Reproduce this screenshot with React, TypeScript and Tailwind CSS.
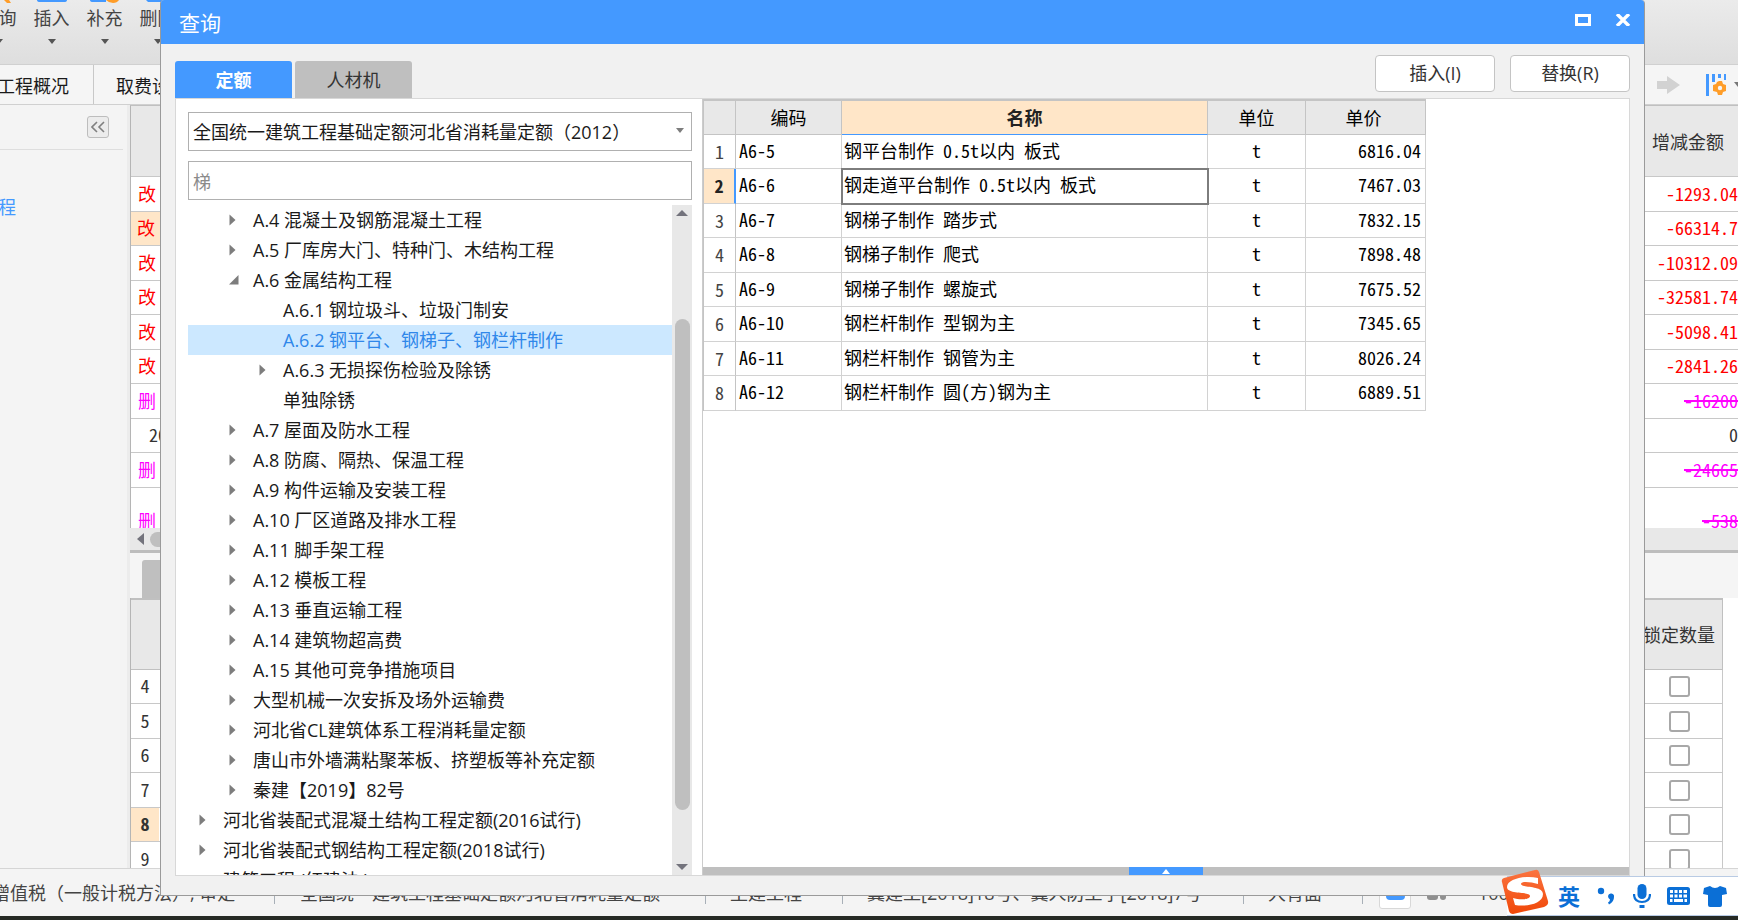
import React from "react";

type Node = { label: string; level: 0 | 1 | 2; state: "closed" | "open" | "leaf"; selected?: boolean };

const tree: Node[] = [
  { label: "A.4 混凝土及钢筋混凝土工程", level: 1, state: "closed" },
  { label: "A.5 厂库房大门、特种门、木结构工程", level: 1, state: "closed" },
  { label: "A.6 金属结构工程", level: 1, state: "open" },
  { label: "A.6.1 钢垃圾斗、垃圾门制安", level: 2, state: "leaf" },
  { label: "A.6.2 钢平台、钢梯子、钢栏杆制作", level: 2, state: "leaf", selected: true },
  { label: "A.6.3 无损探伤检验及除锈", level: 2, state: "closed" },
  { label: "单独除锈", level: 2, state: "leaf" },
  { label: "A.7 屋面及防水工程", level: 1, state: "closed" },
  { label: "A.8 防腐、隔热、保温工程", level: 1, state: "closed" },
  { label: "A.9 构件运输及安装工程", level: 1, state: "closed" },
  { label: "A.10 厂区道路及排水工程", level: 1, state: "closed" },
  { label: "A.11 脚手架工程", level: 1, state: "closed" },
  { label: "A.12 模板工程", level: 1, state: "closed" },
  { label: "A.13 垂直运输工程", level: 1, state: "closed" },
  { label: "A.14 建筑物超高费", level: 1, state: "closed" },
  { label: "A.15 其他可竞争措施项目", level: 1, state: "closed" },
  { label: "大型机械一次安拆及场外运输费", level: 1, state: "closed" },
  { label: "河北省CL建筑体系工程消耗量定额", level: 1, state: "closed" },
  { label: "唐山市外墙满粘聚苯板、挤塑板等补充定额", level: 1, state: "closed" },
  { label: "秦建【2019】82号", level: 1, state: "closed" },
  { label: "河北省装配式混凝土结构工程定额(2016试行)", level: 0, state: "closed" },
  { label: "河北省装配式钢结构工程定额(2018试行)", level: 0, state: "closed" },
  { label: "建筑工程 (红建法 )", level: 0, state: "leaf" },
];

const items = [
  ["A6-5", "钢平台制作 0.5t以内 板式", "6816.04"],
  ["A6-6", "钢走道平台制作 0.5t以内 板式", "7467.03"],
  ["A6-7", "钢梯子制作 踏步式", "7832.15"],
  ["A6-8", "钢梯子制作 爬式", "7898.48"],
  ["A6-9", "钢梯子制作 螺旋式", "7675.52"],
  ["A6-10", "钢栏杆制作 型钢为主", "7345.65"],
  ["A6-11", "钢栏杆制作 钢管为主", "8026.24"],
  ["A6-12", "钢栏杆制作 圆(方)钢为主", "6889.51"],
];

const changes = [
  { mark: "改", amount: "-1293.04" },
  { mark: "改", amount: "-66314.7", active: true },
  { mark: "改", amount: "-10312.09" },
  { mark: "改", amount: "-32581.74" },
  { mark: "改", amount: "-5098.41" },
  { mark: "改", amount: "-2841.26" },
  { mark: "删", amount: "-16200" },
  { mark: "20", amount: "0" },
  { mark: "删", amount: "-24665" },
];

const grid = "font-['Noto_Sans_Mono_CJK_SC','Noto_Sans_CJK_SC',monospace]";
const markColor: Record<string, string> = { 改: "text-[#ff0000]", 删: "text-[#ff00ff]", "20": "text-[#333333]" };
const indent = ["pl-[11px]", "pl-[41px]", "pl-[71px]"];

function Caret({ className = "" }: { className?: string }) {
  return (
    <svg viewBox="0 0 8 5" className={`h-[5px] w-2 shrink-0 ${className}`}>
      <path d="M0 0h8L4 5z" fill="currentColor" />
    </svg>
  );
}

function TreeRow({ node }: { node: Node }) {
  return (
    <li
      className={`flex h-[30px] shrink-0 items-center gap-[13px] whitespace-nowrap ${indent[node.level]} ${
        node.selected ? "bg-[#cce8ff] text-[#2f87ea]" : "text-[#1a1a1a]"
      }`}
    >
      <svg viewBox="0 0 11 12" className="h-3 w-[11px] shrink-0 text-[#7d7d7d]">
        {node.state === "closed" && <path d="M0.500 0.500L6.500 6L0.500 11.500z" fill="currentColor" />}
        {node.state === "open" && <path d="M9.500 1v9.500H0z" fill="currentColor" />}
      </svg>
      <span>{node.label}</span>
    </li>
  );
}

function ToolItem({ label, icon }: { label: string; icon: React.ReactNode }) {
  return (
    <button className="flex h-full w-[53px] shrink-0 flex-col items-center whitespace-nowrap text-[#444444]">
      <svg viewBox="0 0 32 3" className="h-[3px] w-8 shrink-0">{icon}</svg>
      <span className="h-[30px] leading-[30px]">{label}</span>
      <Caret className="mt-[6px] text-[#555555]" />
    </button>
  );
}

function Workspace() {
  return (
    <div className="flex h-full flex-col overflow-hidden">
      <div className="flex h-[65px] shrink-0 overflow-hidden border-b border-[#d0d0d0] bg-linear-to-b from-[#ebebeb] to-[#dedede]">
        <div className="-ml-7 flex">
          <ToolItem label="查询" icon={<path d="M21 0h5l2 3h-4z" fill="#ff9d28" />} />
          <ToolItem label="插入" icon={<path d="M1 0h30q0 2-3 2H4Q1 2 1 0z" fill="#4499ff" />} />
          <ToolItem label="补充" icon={<><path d="M1 0h16v2H4Q1 2 1 0z" fill="#4499ff" /><path d="M17 0h13q-2 3-6 3t-7-3z" fill="#ff9d28" /></>} />
          <ToolItem label="删除" icon={<path d="M4 0h26v2H6z" fill="#4499ff" />} />
        </div>
      </div>

      <div className="flex h-10 shrink-0 items-stretch border-b border-[#d0d0d0] bg-[#f5f5f5] text-[#1a1a1a]">
        <button className="flex w-[94px] items-center justify-end overflow-hidden border-r border-[#c8c8c8] pt-[2px] pr-6 whitespace-nowrap">工程概况</button>
        <button className="px-[22px] pt-[2px] whitespace-nowrap">取费设置</button>
        <div className="ml-auto flex items-center">
          <svg viewBox="0 0 23 18" className="mr-[26px] h-[18px] w-[23px] text-[#d2d2d2]">
            <path d="M0 5h10V0l13 9-13 9v-5H0z" fill="currentColor" />
          </svg>
          <svg viewBox="0 0 22 24" className="mr-[6px] h-6 w-[22px]">
            <path d="M0 1h3v22H0zM6 1h3v8H6zM12 1h3v4h-3zM18 1h2v6h-2z" fill="#4499ff" />
            <path d="M11 9l2-1h3l1 3 3 1v6l-3 1-1 3h-4l-1-3-4-1v-6l3-1z" fill="#ff9d28" />
            <circle cx="14" cy="15" r="2.200" fill="#f5f5f5" />
          </svg>
          <Caret className="-mr-1 text-[#777777]" />
        </div>
      </div>

      <div className="flex min-h-0 flex-1">
        <aside className="flex w-[127px] shrink-0 flex-col bg-[#f4f4f4]">
          <div className="mr-1 flex h-[45px] items-start justify-end border-b border-[#dedede] pt-[11px] pr-[14px]">
            <button aria-label="折叠" className="flex size-[22px] items-center justify-center rounded-[3px] border border-[#bdbdbd] bg-[#ececec]">
              <svg viewBox="0 0 14 12" className="h-3 w-[14px]" fill="none" stroke="#808080" strokeWidth="1.600">
                <path d="M6 1L1 6l5 5M13 1L8 6l5 5" />
              </svg>
            </button>
          </div>
          <a href="#project" className="mt-[42px] flex h-[30px] w-4 items-center justify-end whitespace-nowrap text-[#4499ff]">工程</a>
        </aside>
        <div className="flex min-w-0 flex-1 flex-col border-l-[3px] border-[#ececec] bg-white">
          <div className={`flex h-[423px] shrink-0 flex-col overflow-hidden border-t border-l border-t-[#c0c0c0] border-l-[#b5b5b5] ${grid}`}>
            <div className="flex h-[71px] shrink-0 items-center justify-end border-b border-[#c8c8c8] bg-[#e8e8e8] pr-[14px] text-[#333333]">增减金额</div>
            {changes.map((c, i) => (
              <div key={i} className="flex h-[35px] shrink-0 items-center justify-between border-b border-[#c8c8c8] odd:h-[34px]">
                <span
                  className={`flex h-full items-center pb-[3px] ${c.active ? "w-[100px] bg-[#ffe6c8] pl-[6px]" : c.mark === "20" ? "pl-[18px]" : "pl-[7px]"} ${markColor[c.mark]}`}
                >
                  {c.mark}
                </span>
                <span className={`pb-[3px] ${markColor[c.mark]} ${c.mark === "删" ? "line-through decoration-2" : ""}`}>{c.amount}</span>
              </div>
            ))}
            <div className="flex h-16 shrink-0 items-center justify-between text-[#ff00ff]">
              <span className="pl-[7px]">删</span>
              <span className="line-through decoration-2">-538</span>
            </div>
          </div>
          <div className="flex h-[22px] shrink-0 items-center gap-[6px] bg-[#e8e8e8] pl-[7px]">
            <svg viewBox="0 0 7 12" className="h-3 w-[7px]"><path d="M7 0v12L0 6z" fill="#73737c" /></svg>
            <div className="h-[15px] w-[500px] rounded-full bg-[#bfbfbf]" />
          </div>
          <div className="h-[3px] shrink-0 bg-[#bdbdbd]" />
          <div className="flex h-[45px] shrink-0 items-end bg-[#f5f5f5] pl-3">
            <div className="h-[38px] w-[100px] rounded-t-[3px] bg-[#bfbfbf]" />
          </div>
          <div className="flex min-h-0 flex-1 flex-col overflow-hidden border-l border-[#b5b5b5]">
            <div className="mr-[15px] flex h-[72px] shrink-0 items-center justify-end border-t-2 border-r border-b border-[#c0c0c0] bg-[#e8e8e8] pr-[7px] text-[#333333]">锁定数量</div>
            {[4, 5, 6, 7, 8, 9].map((n) => (
              <label
                key={n}
                className={`mr-[15px] flex h-[34px] shrink-0 items-center justify-between border-r border-b border-[#c8c8c8] pr-8 odd:h-[35px] ${grid}`}
              >
                <span className={`flex h-full w-7 items-center justify-center pb-[3px] ${n === 8 ? "bg-[#ffe6c8] font-bold" : ""} text-[#333333]`}>{n}</span>
                <input type="checkbox" className="size-[21px] appearance-none rounded-[3px] border-2 border-[#a8a8a8] bg-white" />
              </label>
            ))}
          </div>
        </div>
      </div>

      <footer className="flex h-12 shrink-0 items-center border-t border-[#d5d5d5] bg-[#f4f4f4] whitespace-nowrap text-[#444444]">
        <span className="-ml-2 w-[282px]">增值税（一般计税方法）, 审定</span>
        <span className="h-[22px] w-[431px] border-l border-[#a8b0b8] pl-[25px]">全国统一建筑工程基础定额河北省消耗量定额</span>
        <span className="h-[22px] w-[137px] border-l border-[#a8b0b8] pl-6">土建工程</span>
        <span className="h-[22px] w-[401px] border-l border-[#a8b0b8] pl-6">冀建工[2018]18号、冀人防工字[2018]7号</span>
        <span className="h-[22px] w-[119px] border-l border-[#a8b0b8] pl-6">大背面</span>
        <span className="flex h-[22px] items-center border-l border-[#a8b0b8] pl-4">
          <span className="flex h-8 w-8 items-center justify-center rounded-[3px] border border-[#d8d8d8] bg-white">
            <span className="h-[14px] w-[19px] rounded-[4px] bg-[#4499ff]" />
          </span>
          <span className="ml-4 flex gap-[2px]">
            <span className="h-[14px] w-[11px] rounded-[3px] bg-[#8f8f8f]" />
            <span className="h-[14px] w-[6px] rounded-[3px] bg-[#8f8f8f]" />
          </span>
          <span className="ml-8">100%</span>
        </span>
      </footer>
      <div className="h-[4px] shrink-0 bg-[#262a25]" />
    </div>
  );
}

function ItemTable() {
  return (
    <table className={`w-[723px] table-fixed border-separate border-spacing-0 border-t-2 border-l border-[#c4c4c4] text-black ${grid}`}>
      <colgroup>
        <col className="w-8" />
        <col className="w-[106px]" />
        <col />
        <col className="w-[98px]" />
        <col className="w-[120px]" />
      </colgroup>
      <thead>
        <tr className="h-[34px] bg-[#e8e8e8] [&>th]:border-r [&>th]:border-b [&>th]:border-[#c4c4c4] [&>th]:p-0 [&>th]:pb-[2px] [&>th]:leading-[30px]">
          <th aria-label="序号" />
          <th className="font-normal">编码</th>
          <th className="border-b-[#4499ff]! bg-[#ffe6c8] font-bold text-[#222222]">名称</th>
          <th className="font-normal">单位</th>
          <th className="pr-1! font-normal">单价</th>
        </tr>
      </thead>
      <tbody>
        {items.map(([code, name, price], i) => {
          const active = i === 1;
          return (
            <tr key={code} className="h-[34px] even:h-[35px] [&>td]:border-r [&>td]:border-b [&>td]:border-[#d2d2d2] [&>td]:pt-0 [&>td]:leading-[28px]">
              <td
                className={`pb-[2px] text-center ${active ? "border-r-2! border-r-[#4499ff]! bg-[#ffe6c8] font-bold text-[#222222]" : "border-r-[#c4c4c4]! text-[#444444]"}`}
              >
                {i + 1}
              </td>
              <td className="pb-1 pl-[3px]">{code}</td>
              <td className={`pb-1 pl-[2px] whitespace-pre ${active ? "outline-2 -outline-offset-1 outline-[#7d7d7d]" : ""}`}>{name}</td>
              <td className="pb-1 text-center">t</td>
              <td className="pr-1 pb-1 text-right">{price}</td>
            </tr>
          );
        })}
      </tbody>
    </table>
  );
}

function QueryDialog() {
  return (
    <section
      role="dialog"
      aria-label="查询"
      className="absolute inset-x-0 top-0 bottom-6 mr-[93px] ml-[160px] flex flex-col rounded-t-[4px] border border-t-0 border-[#9a9a9a] bg-[#f1f1f1]"
    >
      <header className="flex h-11 shrink-0 items-center rounded-t-[3px] bg-[#4499ff] pr-[13px] pl-[18px] text-white">
        <h1 className="mr-auto pt-[2px] text-[21px]">查询</h1>
        <button aria-label="最大化" className="mr-6">
          <svg viewBox="0 0 16 12" className="mb-1 h-3 w-4"><path d="M1.500 1.500h13v9h-13z" fill="none" stroke="white" strokeWidth="3" /></svg>
        </button>
        <button aria-label="关闭">
          <svg viewBox="0 0 16 12" className="mb-1 h-3 w-4"><path d="M2 0L14 12M14 0L2 12" fill="none" stroke="white" strokeWidth="3.400" /></svg>
        </button>
      </header>

      <div className="flex h-[54px] shrink-0 items-end pr-[14px] pl-[14px]">
        <div role="tablist" className="mr-auto flex gap-[3px]">
          <button role="tab" aria-selected="true" className="h-[37px] w-[117px] rounded-t-[3px] bg-[#4499ff] font-bold text-white">定额</button>
          <button role="tab" aria-selected="false" className="h-[37px] w-[117px] rounded-t-[3px] bg-[#bfbfbf] text-[#333333]">人材机</button>
        </div>
        <div className="mb-[6px] flex gap-[15px]">
          <button className="h-[37px] w-[120px] rounded-[4px] border border-[#c4c4c4] bg-white pb-[2px] text-[#333333]">插入(I)</button>
          <button className="h-[37px] w-[120px] rounded-[4px] border border-[#c4c4c4] bg-white pb-[2px] text-[#333333]">替换(R)</button>
        </div>
      </div>

      <div className="mx-[14px] mb-[19px] flex min-h-0 flex-1 border border-[#d8d8d8] bg-white">
        <div className="flex w-[526px] shrink-0 flex-col pt-[13px] pr-[10px] pl-3">
          <div className="relative shrink-0">
            <select aria-label="定额库" className="h-[39px] w-full appearance-none border border-[#b0b0b0] bg-white pl-1 text-[#1a1a1a]">
              <option>全国统一建筑工程基础定额河北省消耗量定额（2012）</option>
            </select>
            <Caret className="pointer-events-none absolute top-4 right-2 text-[#7d7d7d]" />
          </div>
          <input aria-label="搜索" defaultValue="梯" className="mt-[10px] h-[39px] w-full shrink-0 border border-[#b0b0b0] bg-white pl-1 text-[#8a8a8a]" />
          <div className="mt-[5px] flex min-h-0 flex-1">
            <ul className="flex min-w-0 flex-1 flex-col overflow-hidden">
              {tree.map((n) => (
                <TreeRow key={n.label} node={n} />
              ))}
            </ul>
            <div className="flex w-5 shrink-0 flex-col items-center bg-[#e8e8e8] py-[5px]">
              <svg viewBox="0 0 12 6" className="h-[6px] w-3 shrink-0"><path d="M0 6h12L6 0z" fill="#73737c" /></svg>
              <div className="mt-[103px] mb-[54px] w-[15px] flex-1 rounded-full bg-[#bfbfbf]" />
              <svg viewBox="0 0 12 6" className="h-[6px] w-3 shrink-0"><path d="M0 0h12L6 6z" fill="#73737c" /></svg>
            </div>
          </div>
        </div>
        <div className="flex min-w-0 flex-1 flex-col border-l border-[#cccccc]">
          <div className="min-h-0 flex-1">
            <ItemTable />
          </div>
          <button aria-label="展开" className="flex h-2 shrink-0 justify-center bg-[#bfbfbf]">
            <span className="flex h-2 w-[74px] items-center justify-center bg-[#4499ff]">
              <svg viewBox="0 0 8 5" className="h-[5px] w-2"><path d="M0 5h8L4 0z" fill="white" /></svg>
            </span>
          </button>
        </div>
      </div>
    </section>
  );
}

function InputMethodBar() {
  return (
    <div className="absolute right-0 bottom-1 flex h-10 items-center border-y border-[#b9cbe4] bg-white pr-[11px] text-[#0b6fd6]">
      <svg viewBox="0 0 48 46" className="-mt-2 -ml-[6px] h-[46px] w-12">
        <defs>
          <linearGradient id="brand" x1="0" y1="0" x2="0" y2="1">
            <stop offset="0" stopColor="#fb7440" />
            <stop offset="1" stopColor="#f04708" />
          </linearGradient>
        </defs>
        <path d="M3 9Q0 10 1 13L8 42Q9 45 12 45L43 38Q48 36 47 32L38 3Q37 0 34 1z" fill="url(#brand)" />
        <path d="M37 9C24 6 6 10 6 18C6 26 29 22 29 27C29 31 18 31 12 29L14 36C25 38 42 35 42 25C42 16 20 19 20 15C20 12 30 13 37 15z" fill="white" />
      </svg>
      <span className="ml-[9px] text-[22px] font-bold">英</span>
      <svg viewBox="0 0 18 18" className="ml-[17px] h-[18px] w-[18px]">
        <circle cx="4" cy="4" r="3.200" fill="currentColor" />
        <path d="M11 9a3 3 0 1 1 6 1q0 5-5 7.500l-1-2q2-1 2-3-2-1-2-3.500z" fill="currentColor" />
      </svg>
      <svg viewBox="0 0 18 24" className="ml-[18px] h-6 w-[18px]">
        <rect x="4.500" y="0" width="9" height="15" rx="4.500" fill="currentColor" />
        <path d="M1 10q0 8 8 8t8-8" fill="none" stroke="currentColor" strokeWidth="2.200" />
        <path d="M6.500 21h5v3h-5z" fill="currentColor" />
      </svg>
      <svg viewBox="0 0 23 18" className="ml-4 h-[18px] w-[23px]">
        <rect width="23" height="18" rx="2.500" fill="currentColor" />
        <path d="M3 3h3v3H3zM7.500 3h3v3h-3zM12 3h3v3h-3zM16.500 3h3.500v3h-3.500zM3 7.500h3v3H3zM7.500 7.500h3v3h-3zM12 7.500h3v3h-3zM16.500 7.500h3.500v3h-3.500zM3 12h2.500v3H3zM7 12h9v3H7zM17.500 12H20v3h-2.500z" fill="white" />
      </svg>
      <svg viewBox="0 0 24 22" className="ml-[13px] h-[22px] w-6">
        <path d="M7 1q5 4 10 0l6 2 1 6-5 1v10q0 2-2 2H7q-2 0-2-2V10L0 9l1-6z" fill="currentColor" />
      </svg>
    </div>
  );
}

export default function App() {
  return (
    <main className="relative h-screen overflow-hidden bg-[#f4f4f4] font-['Open_Sans','Noto_Sans_CJK_SC',sans-serif] text-[18px] leading-[22px]">
      <Workspace />
      <QueryDialog />
      <InputMethodBar />
    </main>
  );
}
